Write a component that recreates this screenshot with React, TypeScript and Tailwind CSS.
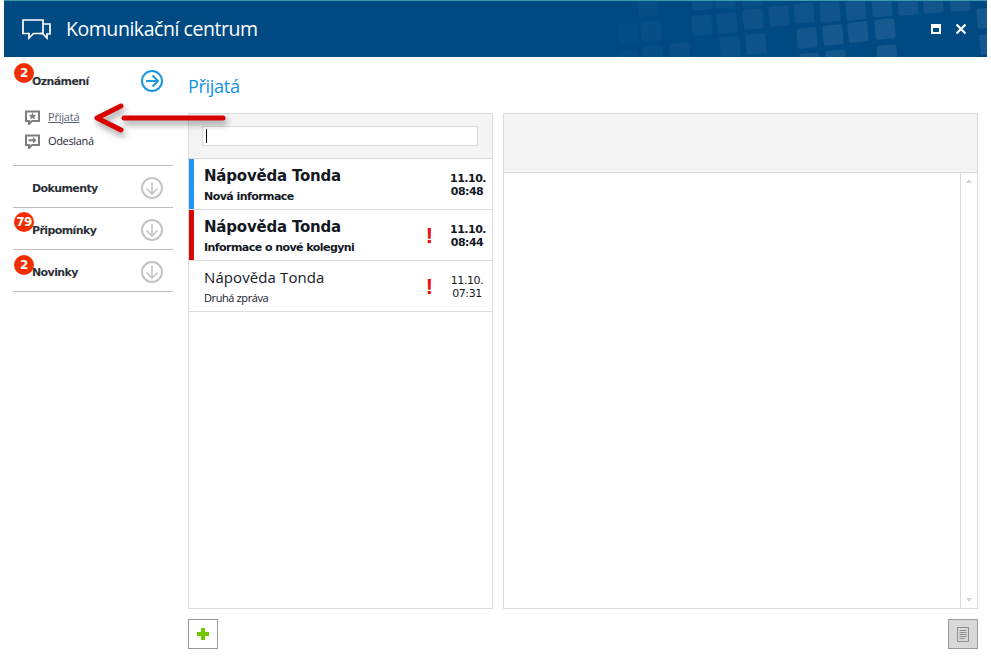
import { ReactNode } from "react";

const tiles = [
  [618, 24, 0.012], [618, 50, 0.015], [638, -4, 0.03], [641, 21, 0.03], [643, 46, 0.03], [670, 43, 0.035],
  [692, 15, 0.045], [717, 13, 0.045], [743, 9, 0.05], [769, 6, 0.05], [794, 3, 0.055], [820, 2, 0.06],
  [846, 0, 0.065], [872, -3, 0.065], [898, -5, 0.07], [923, -7, 0.07], [950, -9, 0.07], [977, 8, 0.08],
  [980, 34, 0.08], [692, -10, 0.045], [715, -12, 0.045], [742, -14, 0.045],
  [720, 37, 0.045], [746, 34, 0.05], [797, 28, 0.07], [823, 25, 0.08], [848, 22, 0.085], [875, 19, 0.09],
  [800, 53, 0.07], [826, 50, 0.075], [877, 45, 0.085],
];

function HeaderPattern() {
  return (
    <svg className="absolute left-0 top-0 pointer-events-none" width="983" height="56" viewBox="4 1 983 56">
      {tiles.map(([x, y, o]) => (
        <rect
          key={`${x}-${y}`}
          x={x}
          y={y}
          width="20"
          height="20"
          rx="2"
          fill="#fff"
          fillOpacity={o}
          transform={`rotate(-5 ${x + 10} ${y + 10})`}
        />
      ))}
    </svg>
  );
}

function Badge({ n, top }: { n: number; top: string }) {
  return (
    <span className={`absolute left-[1px] ${top} flex h-5 w-5 items-center justify-center rounded-full bg-[#f22e00] text-[12px] font-bold text-white font-['DejaVu_Sans',sans-serif] tracking-[-0.5px]`}>
      {n}
    </span>
  );
}

function CircleArrow({ active }: { active?: boolean }) {
  const color = active ? "#1a9ae0" : "#c4c4c4";
  return (
    <svg width="22" height="22" viewBox="0 0 22 22" fill="none" stroke={color} strokeWidth="2">
      <circle cx="11" cy="11" r="10" />
      {active ? (
        <path d="M5 11h11.5M11.5 5.5l5.5 5.5-5.5 5.5" />
      ) : (
        <path d="M11 5v11.5M5.5 11.5l5.5 5.5 5.5-5.5" strokeWidth="1.6" />
      )}
    </svg>
  );
}

function SectionRow({ label, badge, badgeTop }: { label: string; badge?: number; badgeTop?: string }) {
  return (
    <div className="relative flex h-[42px] items-center justify-between border-b border-[#bdbdbd] pl-[19px] pr-[10px]">
      {badge !== undefined && <Badge n={badge} top={badgeTop ?? "top-1"} />}
      <span className="mt-[5px] text-[11px] font-bold tracking-[-0.6px] text-[#2b3038] font-['DejaVu_Sans',sans-serif]">{label}</span>
      <span className="mt-[2px] flex">
        <CircleArrow />
      </span>
    </div>
  );
}

function BubbleIcon({ children }: { children: ReactNode }) {
  return (
    <svg width="15" height="15" viewBox="0 0 15 15" className="shrink-0">
      <path d="M1 1.5h13v9.5H7l-3 3v-3H1z" fill="#fff" stroke="#7d7d7d" strokeWidth="2" />
      {children}
    </svg>
  );
}

function Message(props: { bar?: string; subject: string; date: string; time: string; bold: boolean; alert?: boolean }) {
  const { bar, subject, date, time, bold, alert } = props;
  return (
    <div className="relative flex h-[51px] items-center border-b border-[#dcdcdc] font-['DejaVu_Sans',sans-serif] text-[#14181f]">
      <div className={`h-full w-[5px] shrink-0 ${bar ?? ""}`} />
      <div className={`flex-1 pl-[10px] ${bold ? "mt-[5px]" : "mt-[3px]"}`}>
        {bold ? (
          <div className="mb-[3px] mt-[-3px] text-[15px] font-bold leading-[20px] tracking-[-0.2px]">Nápověda Tonda</div>
        ) : (
          <div className="mb-[3px] mt-[-3px] font-['Open_Sans',sans-serif] text-[15px] leading-[20px] tracking-[0.1px]">Nápověda Tonda</div>
        )}
        <div className={bold ? "text-[11px] font-bold leading-[16px] tracking-[-0.55px]" : "font-['Open_Sans',sans-serif] text-[11px] leading-[16px] tracking-[-0.4px]"}>{subject}</div>
      </div>
      {alert && <span className="mr-[17px] mt-[2px] font-['Liberation_Sans',sans-serif] text-[22px] font-bold leading-none text-[#f01010]">!</span>}
      <div className={`mr-[8px] mt-[2px] w-[34px] text-center text-[11px] leading-[13px] ${bold ? "font-bold tracking-[-0.5px]" : "tracking-[-0.4px]"}`}>
        {date}
        <br />
        {time}
      </div>
    </div>
  );
}

export default function App() {
  return (
    <div className="h-[658px] w-[991px] overflow-hidden bg-white">
      <div className="ml-[4px] flex h-[658px] w-[983px] flex-col">
        <div className="h-px bg-[#3d9aa8]" />
        <header className="relative flex h-[56px] items-center justify-between bg-[#004a84] pl-[18px] pr-[21px]">
          <HeaderPattern />
          <div className="relative flex items-center gap-[15px]">
            <svg width="29" height="22" viewBox="0 0 29 22" fill="none" stroke="#fff" strokeWidth="1.7">
              <path d="M1 2h20v13.5H11.5L7 20v-4.5H1z" />
              <path d="M21 6h7v10h-3v4l-4.5-4.5H18" />
            </svg>
            <h1 className="font-['Open_Sans',sans-serif] text-[19.5px] leading-none tracking-[-0.45px] text-white">Komunikační centrum</h1>
          </div>
          <div className="relative flex items-center gap-[15px]">
            <span className="h-[10px] w-[10px] border-2 border-t-4 border-white" />
            <svg width="10" height="10" viewBox="0 0 10 10" stroke="#fff" strokeWidth="2.2">
              <path d="M0.5 0.5l9 9M9.5 0.5l-9 9" />
            </svg>
          </div>
        </header>

        <div className="relative flex flex-1 pl-[9px] pr-[9px]">
          <aside className="w-[160px] shrink-0">
            <div className="relative h-[109px] border-b border-[#bdbdbd]">
              <Badge n={2} top="top-[6px]" />
              <div className="flex h-[48px] items-center justify-between pl-[19px] pr-[10px]">
                <span className="mt-[3px] text-[11px] font-bold tracking-[-0.6px] text-[#2b3038] font-['DejaVu_Sans',sans-serif]">Oznámení</span>
                <CircleArrow active />
              </div>
              <div className="flex h-[24px] items-center gap-[8px] pl-[12px]">
                <BubbleIcon>
                  <path d="M7.5 2.6l1.1 2.3 2.5.3-1.8 1.6.5 2.4-2.3-1.2-2.3 1.2.5-2.4-1.8-1.6 2.5-.3z" fill="#7d7d7d" />
                </BubbleIcon>
                <span className="font-['Open_Sans',sans-serif] text-[11px] tracking-[-0.2px] text-[#5c6470] underline">Přijatá</span>
              </div>
              <div className="flex h-[24px] items-center gap-[8px] pl-[12px]">
                <BubbleIcon>
                  <path d="M3.5 5.3h4.5V3l3.5 3.3L8 9.6V7.3H3.5z" fill="#7d7d7d" />
                </BubbleIcon>
                <span className="font-['Open_Sans',sans-serif] text-[11px] tracking-[-0.35px] text-[#1f2a38]">Odeslaná</span>
              </div>
            </div>
            <SectionRow label="Dokumenty" />
            <SectionRow label="Připomínky" badge={79} badgeTop="top-[4px]" />
            <SectionRow label="Novinky" badge={2} badgeTop="top-[5px]" />
          </aside>

          <main className="ml-[15px] flex min-w-0 flex-1 flex-col">
            <h2 className="flex h-[56px] items-center pt-[3px] font-['Open_Sans',sans-serif] text-[18px] tracking-[-0.3px] text-[#0f95e0]">Přijatá</h2>
            <div className="flex h-[496px] gap-[10px]">
              <section className="w-[305px] shrink-0 border border-[#dcdcdc]">
                <div className="h-[45px] border-b border-[#dcdcdc] bg-[#f4f4f4] pl-[13px] pr-[14px] pt-[12px]">
                  <div className="flex h-[20px] items-center border border-[#dcdcdc] bg-white pl-[3px]">
                    <span className="h-[14px] w-px bg-black" />
                  </div>
                </div>
                <Message bar="bg-[#2196f3]" subject="Nová informace" date="11.10." time="08:48" bold />
                <Message bar="bg-[#d90808]" subject="Informace o nové kolegyni" date="11.10." time="08:44" bold alert />
                <Message subject="Druhá zpráva" date="11.10." time="07:31" bold={false} alert />
              </section>
              <section className="flex min-w-0 flex-1 flex-col border border-[#dcdcdc]">
                <div className="h-[59px] border-b border-[#dcdcdc] bg-[#f4f4f4]" />
                <div className="flex flex-1 justify-end">
                  <div className="flex w-[17px] flex-col items-center justify-between border-l border-[#dcdcdc] py-[6px]">
                    <span className="h-0 w-0 border-x-[3px] border-b-[4px] border-x-transparent border-b-[#d4d4d4]" />
                    <span className="h-0 w-0 border-x-[3px] border-t-[4px] border-x-transparent border-t-[#d4d4d4]" />
                  </div>
                </div>
              </section>
            </div>
            <div className="mt-[10px] flex justify-between">
              <button className="flex h-[30px] w-[30px] items-center justify-center border border-[#999]">
                <svg width="12" height="12" viewBox="0 0 12 12" fill="#72c900">
                  <path d="M4 0h4v4h4v4H8v4H4V8H0V4h4z" />
                </svg>
              </button>
              <button className="flex h-[30px] w-[30px] items-center justify-center border border-[#999] bg-[#d8d8d8]">
                <svg width="12" height="15" viewBox="0 0 12 15" fill="none" stroke="#8f8f8f">
                  <rect x="0.5" y="0.5" width="11" height="14" />
                  <path d="M2.5 3.5h7M2.5 5.5h7M2.5 7.5h7M2.5 9.5h7M2.5 11.5h5" />
                </svg>
              </button>
            </div>
          </main>

          {/* red annotation arrow over the page */}
          <svg className="pointer-events-none absolute left-[88px] top-[38px] drop-shadow-[2px_4px_3px_rgba(0,0,0,0.4)]" width="150" height="48" viewBox="0 0 150 48" fill="none" stroke="#d90000" strokeWidth="5" strokeLinecap="round" strokeLinejoin="round">
            <path d="M32 23h99" />
            <path d="M29 11L5 23l24 12" />
          </svg>
        </div>
      </div>
    </div>
  );
}
